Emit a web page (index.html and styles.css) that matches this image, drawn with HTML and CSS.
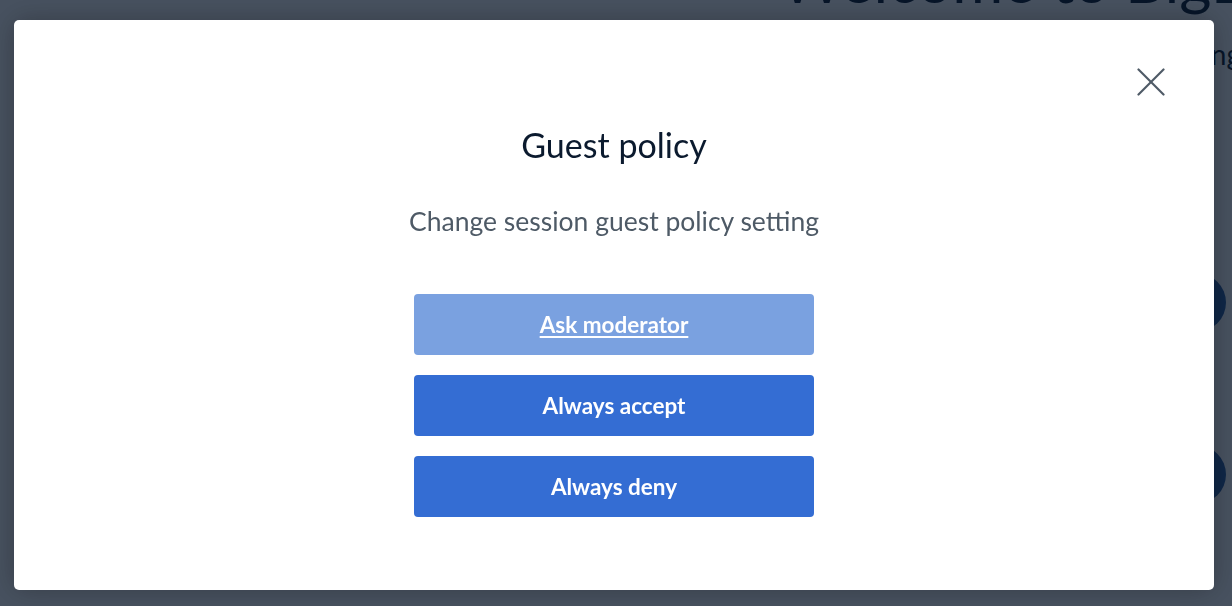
FILE: index.html
```html
<!DOCTYPE html>
<html lang="en">
<head>
<meta charset="utf-8">
<title>Guest policy</title>
<link rel="stylesheet" href="styles.css">
</head>
<body>
<div class="bg-page">
  <h1 class="bg-title">Welcome to BigBlueButton</h1>
  <p class="bg-sub">Start a meeting</p>
  <div class="bg-actions">
    <span class="bg-circle"></span>
    <span class="bg-circle"></span>
  </div>
</div>
<div class="overlay">
  <div class="modal" role="dialog" aria-labelledby="gp-title">
    <div class="modal-header">
      <button class="close-btn" aria-label="Close">
        <svg width="28" height="28" viewBox="0 0 28 28" fill="none" stroke="#4e5a66" stroke-width="2.2" stroke-linecap="round">
          <line x1="1.5" y1="1.5" x2="26.5" y2="26.5"/>
          <line x1="26.5" y1="1.5" x2="1.5" y2="26.5"/>
        </svg>
      </button>
    </div>
    <h2 class="modal-title" id="gp-title">Guest policy</h2>
    <p class="modal-desc">Change session guest policy setting</p>
    <div class="options">
      <button class="option option-active">Ask moderator</button>
      <button class="option">Always accept</button>
      <button class="option">Always deny</button>
    </div>
  </div>
</div>
</body>
</html>
```

FILE: styles.css
```css
* { box-sizing: border-box; }

html, body {
  margin: 0;
  width: 1232px;
  height: 606px;
  overflow: hidden;
  background: #ffffff;
  font-family: Lato, "Noto Sans", sans-serif;
}

.bg-page {
  width: 1241px;
  display: flex;
  flex-direction: column;
  align-items: flex-start;
  padding-left: 780px;
}

.bg-title {
  margin: -57px 0 0 0;
  font-size: 62px;
  font-weight: 400;
  line-height: 72px;
  color: #06172a;
  white-space: nowrap;
}

.bg-sub {
  align-self: flex-end;
  margin: 21px 0 0 0;
  font-size: 28px;
  line-height: 36px;
  color: #06172a;
  white-space: nowrap;
}

.bg-actions {
  display: flex;
  flex-direction: column;
  gap: 113px;
  margin: 201px 0 0 387px;
}

.bg-circle {
  display: block;
  width: 59px;
  height: 59px;
  border-radius: 50%;
  background: #275b9f;
}

.overlay {
  position: fixed;
  inset: 0;
  background: rgba(8, 22, 40, 0.74);
  display: flex;
  align-items: flex-start;
  justify-content: flex-start;
  padding: 20px 0 0 14px;
}

.modal {
  width: 1200px;
  height: 570px;
  background: #ffffff;
  border-radius: 5px;
  box-shadow: 0 0 28px rgba(0, 0, 0, 0.28);
  display: flex;
  flex-direction: column;
  align-items: center;
}

.modal-header {
  width: 100%;
  display: flex;
  justify-content: flex-end;
  padding: 48px 49px 0 0;
}

.close-btn {
  width: 28px;
  height: 28px;
  padding: 0;
  border: 0;
  background: transparent;
  display: flex;
  cursor: pointer;
}

.modal-title {
  margin: 27px 0 0 0;
  font-size: 34px;
  line-height: 44px;
  font-weight: 400;
  color: #0b1a2e;
}

.modal-desc {
  margin: 37px 0 0 0;
  font-size: 26.5px;
  line-height: 34px;
  color: #4e5a66;
}

.options {
  margin-top: 56px;
  display: flex;
  flex-direction: column;
  gap: 20px;
}

.option {
  width: 400px;
  height: 61px;
  border: 0;
  border-radius: 4px;
  background: #346dd3;
  color: #ffffff;
  font-family: inherit;
  font-size: 22.5px;
  font-weight: 700;
  cursor: pointer;
}

.option-active {
  background: #7aa1e0;
  text-decoration: underline;
  text-decoration-thickness: 2px;
  text-underline-offset: 3px;
}
```
